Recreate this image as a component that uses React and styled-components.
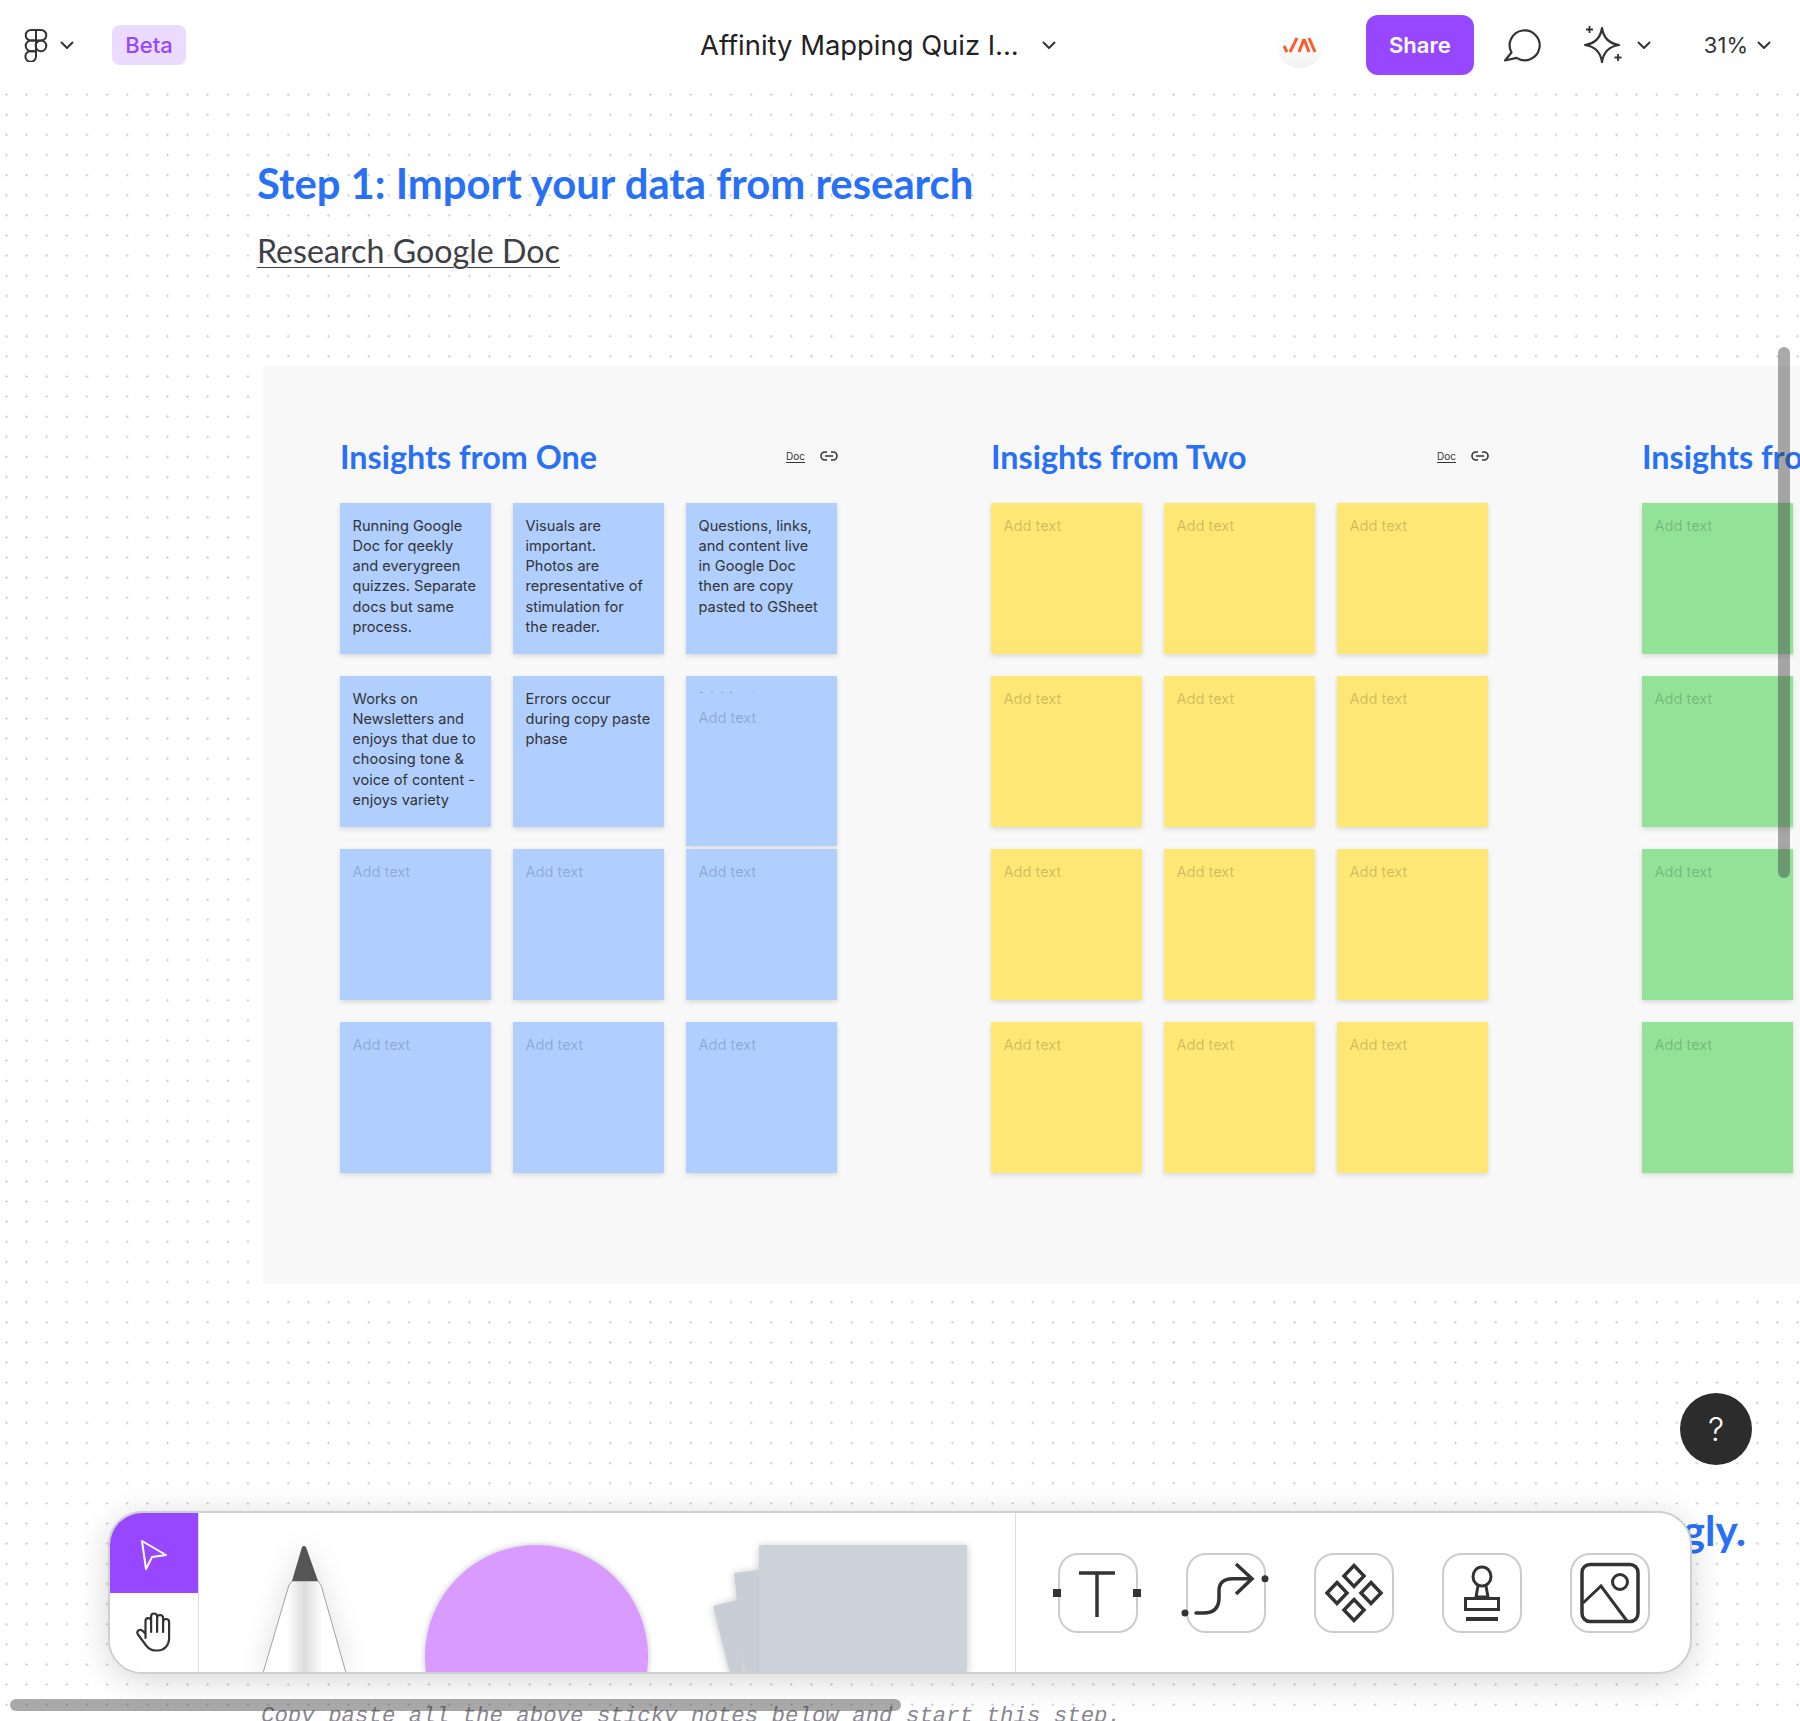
import React from "react";
import styled, { createGlobalStyle } from "styled-components";

const GlobalStyle = createGlobalStyle`
  html, body {
    margin: 0;
    padding: 0;
    background: #ffffff;
  }
`;

const headFont = `"Lato", "Liberation Sans", sans-serif`;
const uiFont = `"Inter", "Liberation Sans", sans-serif`;

const Page = styled.div`
  position: relative;
  width: 1800px;
  height: 1721px;
  overflow: hidden;
  display: flex;
  flex-direction: column;
  background: #ffffff;
  font-family: ${uiFont};
  color: #333333;
`;

const TopBar = styled.header`
  height: 90px;
  flex: none;
  display: grid;
  grid-template-columns: 700px auto 1fr;
  align-items: center;
  background: #ffffff;
`;

const BarSide = styled.div`
  display: flex;
  align-items: center;
  justify-content: ${(p) => (p.$end ? "flex-end" : "flex-start")};
`;

const LogoWrap = styled.div`
  display: flex;
  align-items: center;
  gap: 12px;
  margin-left: 24px;
`;

const Chevron = styled.svg`
  display: block;
  width: 14px;
  height: 8px;
  flex: none;
  fill: none;
  stroke: #333333;
  stroke-width: 2;
`;

const BetaTag = styled.div`
  margin-left: 38px;
  width: 74px;
  height: 40px;
  border-radius: 8px;
  background: #eadbff;
  color: #9747ff;
  font-size: 22px;
  font-weight: 500;
  display: flex;
  align-items: center;
  justify-content: center;
`;

const FileName = styled.div`
  display: flex;
  align-items: center;
  gap: 23px;
  font-size: 27.4px;
  color: #222222;
`;

const Avatar = styled.div`
  width: 46px;
  height: 46px;
  border-radius: 50%;
  background: linear-gradient(#ffffff 40%, #f1f1f1);
  display: flex;
  align-items: center;
  justify-content: center;
  margin-right: 43px;
`;

const ShareButton = styled.div`
  width: 108px;
  height: 60px;
  border-radius: 12px;
  background: #9747ff;
  color: #ffffff;
  font-size: 22px;
  font-weight: 600;
  display: flex;
  align-items: center;
  justify-content: center;
  margin-right: 29px;
`;

const IconGroup = styled.div`
  display: flex;
  align-items: center;
  gap: ${(p) => p.$gap || 15}px;
  margin-right: ${(p) => p.$right || 0}px;
`;

const Zoom = styled.span`
  font-size: 22px;
  color: #333333;
`;

const Canvas = styled.main`
  flex: 1;
  min-height: 0;
  background-color: #ffffff;
  background-image: radial-gradient(circle, #cccccc 0.9px, transparent 1.3px);
  background-size: 20.13px 20.13px;
  background-position: -3.6px -5.4px;
`;

const Intro = styled.section`
  padding: 68px 0 0 257px;
`;

const StepTitle = styled.h1`
  margin: 0;
  font-family: ${headFont};
  font-size: 41.8px;
  line-height: 50px;
  font-weight: 700;
  color: #2871f6;
`;

const DocLink = styled.a`
  display: inline-block;
  margin-top: 24px;
  font-family: ${headFont};
  font-size: 32.2px;
  line-height: 38px;
  color: #3f3f46;
  text-decoration: underline;
  text-decoration-thickness: 1px;
  text-underline-offset: 4px;
`;

const Frame = styled.section`
  margin: 96px 0 0 263px;
  height: 918px;
  background: #f8f8f8;
  display: flex;
  gap: 154px;
  padding: 71px 0 0 77px;
  box-sizing: border-box;
  overflow: hidden;
`;

const Group = styled.div`
  flex: none;
  width: 497px;
`;

const GroupHead = styled.div`
  height: 38px;
  margin-bottom: 28px;
  display: flex;
  align-items: center;
  justify-content: space-between;
`;

const GroupTitle = styled.h2`
  margin: 0;
  font-family: ${headFont};
  font-size: 32.3px;
  font-weight: 700;
  color: #2871f6;
  white-space: nowrap;
`;

const DocMeta = styled.div`
  display: flex;
  align-items: center;
  gap: 15px;
  margin-right: -1px;
  font-size: 10px;
  color: #333333;
`;

const DocTag = styled.span`
  text-decoration: underline;
  text-underline-offset: 2px;
`;

const StickyGrid = styled.div`
  display: grid;
  grid-template-columns: repeat(3, 151px);
  grid-auto-rows: 151px;
  column-gap: 22px;
  row-gap: 22px;
`;

const tones = {
  blue: "#b0cfff",
  yellow: "#ffe775",
  green: "#92e398",
};

const Sticky = styled.div`
  position: relative;
  box-sizing: border-box;
  height: ${(p) => (p.$tall ? "169.5px" : "151px")};
  padding: ${(p) => (p.$tall ? "32px" : "13px")} 0 0 12.5px;
  background: ${(p) => tones[p.$tone]};
  box-shadow: 0 2px 5px rgba(0, 0, 0, 0.13);
  font-size: 14.6px;
  line-height: 20.15px;
  white-space: pre-line;
  color: ${(p) => (p.$empty ? "rgba(0, 0, 0, 0.2)" : "#333333")};
`;

const Specks = styled.svg`
  position: absolute;
  left: 14px;
  top: 15px;
`;

const BelowFrame = styled.section`
  position: relative;
  height: 430px;
`;

const NextTitle = styled.div`
  padding: 221px 54px 0 0;
  text-align: right;
  font-family: ${headFont};
  font-size: 42px;
  line-height: 50px;
  font-weight: 700;
  color: #2871f6;
`;

const CopyNote = styled.p`
  margin: 147px 0 0 261px;
  font-family: "Liberation Mono", monospace;
  font-style: italic;
  font-size: 22.4px;
  line-height: 28px;
  color: #8a8690;
  white-space: nowrap;
`;

const HelpButton = styled.div`
  position: absolute;
  left: 1680px;
  top: 1393px;
  width: 72px;
  height: 72px;
  border-radius: 50%;
  background: #2c2c2c;
  color: #ffffff;
  font-size: 32px;
  font-weight: 300;
  display: flex;
  align-items: center;
  justify-content: center;
`;

const ToolDock = styled.div`
  position: absolute;
  left: 108px;
  top: 1511px;
  width: 1584px;
  height: 163px;
  box-sizing: border-box;
  display: flex;
  border: 2px solid #cfcfcf;
  border-radius: 34px;
  background: #ffffff;
  box-shadow: 0 6px 34px rgba(0, 0, 0, 0.16);
  overflow: hidden;
`;

const ModeColumn = styled.div`
  flex: none;
  width: 88px;
  display: flex;
  flex-direction: column;
  border-right: 1px solid #dddddd;
`;

const ModeCell = styled.div`
  flex: 1;
  display: flex;
  align-items: center;
  justify-content: center;
  background: ${(p) => (p.$active ? "#9747ff" : "#ffffff")};
`;

const CursorArt = styled.svg`
  margin-top: 5px;
`;

const Supplies = styled.div`
  flex: none;
  width: 816px;
  box-sizing: border-box;
  display: flex;
  align-items: flex-start;
  padding: 32px 0 0 64px;
  overflow: hidden;
`;

const PenArt = styled.svg`
  flex: none;
  filter: drop-shadow(0 0 14px rgba(0, 0, 0, 0.12));
`;

const ShapeCircle = styled.div`
  flex: none;
  width: 223px;
  height: 223px;
  margin-left: 79px;
  border-radius: 50%;
  background: #d99bff;
  box-shadow: 0 0 6px rgba(0, 0, 0, 0.25);
`;

const StackArt = styled.svg`
  flex: none;
  margin-left: 65px;
  filter: drop-shadow(0 1px 4px rgba(0, 0, 0, 0.22));
`;

const Inserts = styled.div`
  flex: 1;
  display: flex;
  align-items: center;
  gap: 48px;
  padding-left: 42px;
  border-left: 1px solid #dddddd;
`;

const InsertBox = styled.div`
  flex: none;
  box-sizing: border-box;
  width: 80px;
  height: 80px;
  border: 2px solid #cccccc;
  border-radius: 20px;
`;

const InsertIcon = styled.svg`
  display: block;
  margin: -2px;
  width: 80px;
  height: 80px;
  overflow: visible;
  fill: none;
  stroke: #333333;
  stroke-width: 3.5;
`;

const ScrollThumb = styled.div`
  position: absolute;
  border-radius: 6px;
  background: rgba(60, 60, 60, 0.44);
  ${(p) =>
    p.$vertical
      ? "left: 1778px; top: 347px; width: 12px; height: 531px;"
      : "left: 10px; top: 1699px; width: 891px; height: 12px;"}
`;

const Down = () => (
  <Chevron viewBox="0 0 14 8">
    <path d="M1 1l6 6 6-6" />
  </Chevron>
);

const FigmaMark = () => (
  <svg width="24" height="34" viewBox="0 0 24 34" fill="none" stroke="#333333" strokeWidth="2">
    <path d="M12 2H7a5.3 5.3 0 0 0 0 10.6h5z" />
    <path d="M12 2h5a5.3 5.3 0 0 1 0 10.6h-5z" />
    <path d="M12 12.6H7a5.3 5.3 0 0 0 0 10.6h5z" />
    <circle cx="17" cy="17.9" r="5.3" />
    <path d="M7 23.2h5v5.3a5.3 5.3 0 1 1-5-5.3z" />
  </svg>
);

const JamLogo = () => (
  <svg width="34" height="16" viewBox="0 0 34 16" fill="none" stroke="#ff5a2b" strokeWidth="3">
    <path d="M1 9l3 6" />
    <path d="M7 15l7-14" />
    <path d="M16 15l5-13" />
    <path d="M21 2l5 13" />
    <path d="M26 1l6 14" />
  </svg>
);

const CommentIcon = () => (
  <svg width="38" height="34" viewBox="0 0 38 34" fill="none" stroke="#333333" strokeWidth="2.2">
    <path d="M8.5 24.5L2 32.5l11.5-2.6A15 15 0 1 0 8.5 24.5z" strokeLinejoin="round" />
  </svg>
);

const SparkleIcon = () => (
  <svg width="40" height="40" viewBox="0 0 40 40" fill="none" stroke="#333333" strokeWidth="2.2">
    <path d="M20 3c1.500 10 7 15.500 17 17-10 1.500-15.500 7-17 17-1.500-10-7-15.500-17-17 10-1.500 15.500-7 17-17z" strokeLinejoin="round" />
    <path d="M7.500 1v7M4 4.500h7M36 29v7M32.500 32.500h7" strokeWidth="1.800" />
  </svg>
);

const CursorIcon = () => (
  <CursorArt width="28" height="32" viewBox="0 0 28 32" fill="none" stroke="#ffffff" strokeWidth="2">
    <path d="M2 2l24 14-14 2-6 12z" strokeLinejoin="round" />
  </CursorArt>
);

const HandIcon = () => (
  <svg width="36" height="40" viewBox="0 0 36 40" fill="none" stroke="#333333" strokeWidth="2.2" strokeLinecap="round" strokeLinejoin="round">
    <path d="M9.500 26V9a2.800 2.800 0 0 1 5.600 0V4.500a3 3 0 0 1 6 0V6a3 3 0 0 1 6 0v4a3 3 0 0 1 6 0v16c0 7.500-5 12.500-11 12.500h-3c-4 0-6.500-2-9-5L2 22.500c-1.500-2-.5-4 1.500-4.500 2-.5 3.500.5 6 4" />
    <path d="M15.100 9v11M21.100 6v14M27.100 10v10" />
  </svg>
);

const PenIcon = () => (
  <PenArt width="83" height="128" viewBox="0 0 83 128">
    <defs>
      <linearGradient id="penBody" x1="0" x2="1" y1="0" y2="0">
        <stop offset="0.28" stopColor="#ffffff" />
        <stop offset="0.5" stopColor="#dcdcdc" />
        <stop offset="0.72" stopColor="#ffffff" />
      </linearGradient>
    </defs>
    <path d="M29 36L26 40 0 128h83L58 40l-3-4z" fill="url(#penBody)" stroke="#8c8c8c" strokeWidth="0.8" />
    <path d="M29 36L39 2q2-2 4 0l12 34z" fill="#555555" />
  </PenArt>
);

const StackIcon = () => (
  <StackArt width="254" height="128" viewBox="0 0 254 128">
    <path d="M0 61l24-6 6 73H17z" fill="#c9ced6" />
    <path d="M21 28l25-3v103H32z" fill="#c9ced6" />
    <rect x="46" width="208" height="128" fill="#cdd1d9" />
  </StackArt>
);

const TextIcon = () => (
  <InsertIcon viewBox="0 0 80 80">
    <path d="M21 20h36M39 20v44" />
    <rect x="-5" y="36" width="8" height="8" fill="#333333" stroke="none" />
    <rect x="75" y="36" width="8" height="8" fill="#333333" stroke="none" />
  </InsertIcon>
);

const ConnectorIcon = () => (
  <InsertIcon viewBox="0 0 80 80">
    <path d="M10 60h7c11 0 16-5 16-15v-7c0-8 5-12.300 13-12.300h19" strokeLinecap="round" />
    <path d="M50 11l16 14.700L50 41" />
    <circle cx="-1" cy="60" r="3.500" fill="#333333" stroke="none" />
    <circle cx="79" cy="25.700" r="3.500" fill="#333333" stroke="none" />
  </InsertIcon>
);

const ComponentIcon = () => (
  <InsertIcon viewBox="0 0 80 80">
    <path d="M40 12.500l10 10.500-10 10.500-10-10.500z" />
    <path d="M23 29.500l10 10.500-10 10.500-10-10.500z" />
    <path d="M57 29.500l10 10.500-10 10.500-10-10.500z" />
    <path d="M40 46.500l10 10.500-10 10.500-10-10.500z" />
  </InsertIcon>
);

const StampIcon = () => (
  <InsertIcon viewBox="0 0 80 80">
    <ellipse cx="40" cy="23.500" rx="9" ry="9.500" strokeWidth="3" />
    <path d="M36 33l-2 11h12l-2-11" strokeWidth="3" />
    <path d="M23.500 45.500h33v11h-33z" strokeWidth="3" />
    <path d="M24 66h32" strokeWidth="4" />
  </InsertIcon>
);

const ImageIcon = () => (
  <InsertIcon viewBox="0 0 80 80">
    <rect x="12" y="11.500" width="56" height="57" rx="8" />
    <ellipse cx="50" cy="29" rx="7.500" ry="7.500" strokeWidth="3" />
    <path d="M13 50l18-17 26 35" strokeWidth="3" />
  </InsertIcon>
);

const blueNotes = [
  "Running Google\nDoc for qeekly\nand everygreen\nquizzes. Separate\ndocs but same\nprocess.",
  "Visuals are\nimportant.\nPhotos are\nrepresentative of\nstimulation for\nthe reader.",
  "Questions, links,\nand content live\nin Google Doc\nthen are copy\npasted to GSheet",
  "Works on\nNewsletters and\nenjoys that due to\nchoosing tone &\nvoice of content -\nenjoys variety",
  "Errors occur\nduring copy paste\nphase",
  null,
  null,
  null,
  null,
  null,
  null,
  null,
];

const emptyNotes = Array(12).fill(null);

const groups = [
  { title: "Insights from One", tone: "blue", notes: blueNotes, tallAt: 5 },
  { title: "Insights from Two", tone: "yellow", notes: emptyNotes },
  { title: "Insights from Three", tone: "green", notes: emptyNotes },
];

const NoteGroup = ({ title, tone, notes, tallAt }) => (
  <Group>
    <GroupHead>
      <GroupTitle>{title}</GroupTitle>
      <DocMeta>
        <DocTag>Doc</DocTag>
        <svg width="18" height="12" viewBox="0 0 18 12" fill="none" stroke="#333333" strokeWidth="1.600">
          <path d="M7 2H5a4 4 0 0 0 0 8h2M11 2h2a4 4 0 0 1 0 8h-2M5 6h8" />
        </svg>
      </DocMeta>
    </GroupHead>
    <StickyGrid>
      {notes.map((text, i) => (
        <Sticky key={i} $tone={tone} $empty={!text} $tall={i === tallAt}>
          {i === tallAt && (
            <Specks width="60" height="4" viewBox="0 0 60 4" fill="rgba(0,0,0,0.22)">
              <rect x="0" y="1" width="3" height="1" />
              <rect x="11" y="1" width="2" height="1" />
              <rect x="21" y="1" width="2" height="1" />
              <rect x="30" y="1" width="2" height="1" />
              <rect x="53" y="1" width="1" height="1" />
            </Specks>
          )}
          {text || "Add text"}
        </Sticky>
      ))}
    </StickyGrid>
  </Group>
);

export default function App() {
  return (
    <Page>
      <GlobalStyle />
      <TopBar>
        <BarSide>
          <LogoWrap>
            <FigmaMark />
            <Down />
          </LogoWrap>
          <BetaTag>Beta</BetaTag>
        </BarSide>
        <FileName>
          Affinity Mapping Quiz I...
          <Down />
        </FileName>
        <BarSide $end>
          <Avatar>
            <JamLogo />
          </Avatar>
          <ShareButton>Share</ShareButton>
          <IconGroup $right={41}>
            <CommentIcon />
          </IconGroup>
          <IconGroup $gap={15} $right={53}>
            <SparkleIcon />
            <Down />
          </IconGroup>
          <IconGroup $gap={9} $right={29}>
            <Zoom>31%</Zoom>
            <Down />
          </IconGroup>
        </BarSide>
      </TopBar>

      <Canvas>
        <Intro>
          <StepTitle>Step 1: Import your data from research</StepTitle>
          <DocLink>Research Google Doc</DocLink>
        </Intro>
        <Frame>
          {groups.map((g) => (
            <NoteGroup key={g.title} {...g} />
          ))}
        </Frame>
        <BelowFrame>
          <NextTitle>accordingly.</NextTitle>
          <CopyNote>Copy paste all the above sticky notes below and start this step.</CopyNote>
        </BelowFrame>
      </Canvas>

      <HelpButton>?</HelpButton>

      <ToolDock>
        <ModeColumn>
          <ModeCell $active>
            <CursorIcon />
          </ModeCell>
          <ModeCell>
            <HandIcon />
          </ModeCell>
        </ModeColumn>
        <Supplies>
          <PenIcon />
          <ShapeCircle />
          <StackIcon />
        </Supplies>
        <Inserts>
          <InsertBox><TextIcon /></InsertBox>
          <InsertBox><ConnectorIcon /></InsertBox>
          <InsertBox><ComponentIcon /></InsertBox>
          <InsertBox><StampIcon /></InsertBox>
          <InsertBox><ImageIcon /></InsertBox>
        </Inserts>
      </ToolDock>

      <ScrollThumb $vertical />
      <ScrollThumb />
    </Page>
  );
}
